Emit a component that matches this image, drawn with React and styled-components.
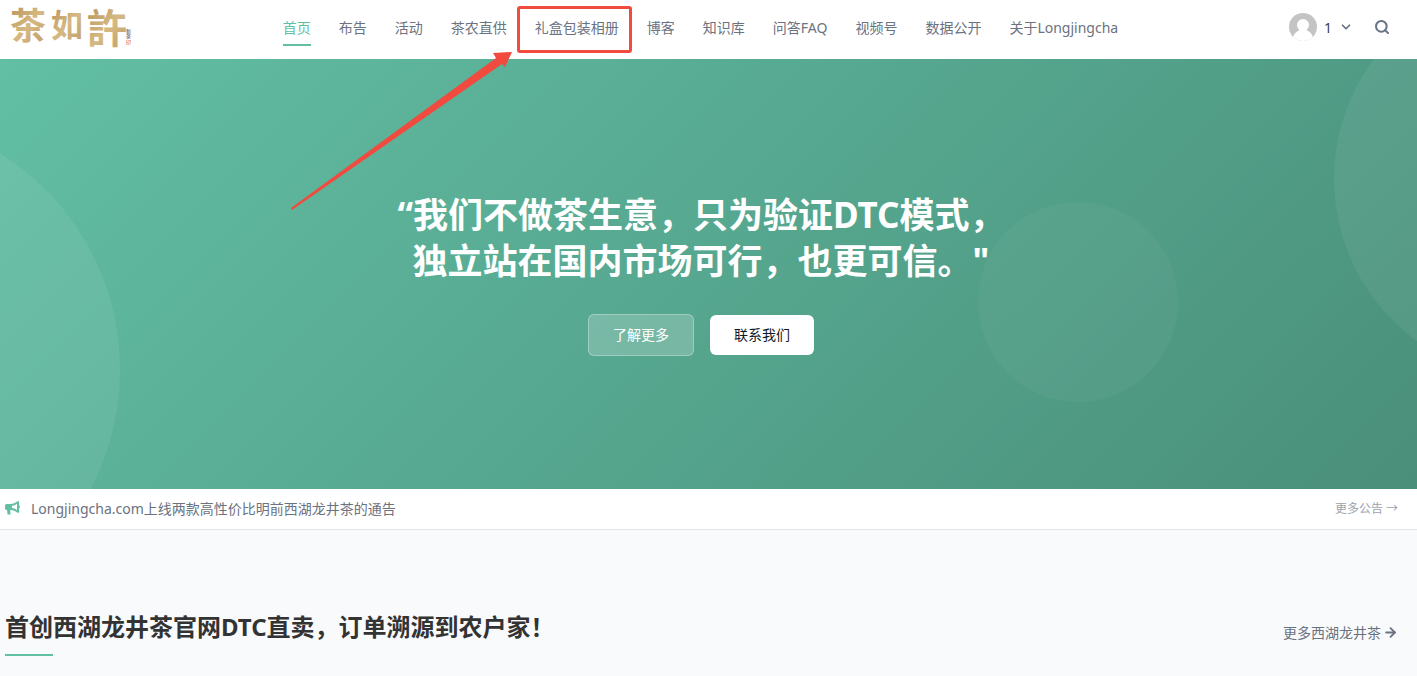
import React from 'react';
import styled, { createGlobalStyle } from 'styled-components';
import { FiArrowRight, FiChevronDown, FiSearch } from 'react-icons/fi';

const menus = [
  '首页',
  '布告',
  '活动',
  '茶农直供',
  '礼盒包装相册',
  '博客',
  '知识库',
  '问答FAQ',
  '视频号',
  '数据公开',
  '关于Longjingcha',
];

const Logo = () => (
  <LogoSvg viewBox="0 0 132 56" role="img" aria-label="茶如許">
    <defs>
      <linearGradient id="gold" x1="0" y1="0" x2="1" y2="1">
        <stop offset="0" stopColor="#b8935c" />
        <stop offset="0.5" stopColor="#d6b982" />
        <stop offset="1" stopColor="#bf9c66" />
      </linearGradient>
    </defs>
    <g fill="url(#gold)" fontWeight="700">
      <text x="10" y="39" fontSize="36">茶</text>
      <text x="51" y="37" fontSize="32">如</text>
      <text x="87" y="43" fontSize="40">許</text>
    </g>
    <g fontSize="5">
      <text x="126" y="33" fill="#333">新</text>
      <text x="126" y="38" fill="#333">茶</text>
      <text x="126" y="44" fill="#d9534f">印</text>
    </g>
  </LogoSvg>
);

const Megaphone = () => (
  <MegaphoneSvg viewBox="0 0 16 16" aria-hidden="true">
    <path
      fill="currentColor"
      fillRule="evenodd"
      d="M14 1c-.6 0-3.400 3-7 3H2.500A1.500 1.500 0 0 0 1 5.500v3A1.500 1.500 0 0 0 2.500 10H3l.6 4.500h3L6.200 10H7c3.600 0 6.400 3 7 3 .5 0 1-.5 1-1V8.400a1.500 1.500 0 0 0 0-2.800V2c0-.5-.5-1-1-1zm-1 2.800v6.400C11.400 9 10 8.300 8 8.100V5.900c2-.2 3.400-.9 5-2.100z"
    />
  </MegaphoneSvg>
);

const App = () => {
  return (
    <>
      <GlobalStyle />
      <Header>
        <LogoLink href="#"><Logo /></LogoLink>
        <Nav>
          {menus.map((menu, index) => (
            <NavLink href="#" key={menu} $active={index === 0}>
              {menu}
              {menu === '礼盒包装相册' && (
                <>
                  <MarkBox />
                  <MarkArrow viewBox="0 0 222 160" aria-hidden="true">
                    <path fill="#f04b3e" d="M0 157 L205 7 L202 2 L221 1 L214 16 L211 13 L1 159 Z" />
                  </MarkArrow>
                </>
              )}
            </NavLink>
          ))}
        </Nav>
        <UserArea>
          <UserButton>
            <Avatar viewBox="0 0 28 28" aria-hidden="true">
              <clipPath id="round"><circle cx="14" cy="14" r="14" /></clipPath>
              <g clipPath="url(#round)">
                <rect width="28" height="28" fill="#c4c4c4" />
                <circle cx="14" cy="12" r="6" fill="#fff" />
                <path d="M3 28 C4 22 6 19 11 17 H17 C22 19 24 22 25 28 Z" fill="#fff" />
              </g>
            </Avatar>
            1
            <FiChevronDown size={14} strokeWidth={3} color="#687385" />
          </UserButton>
          <SearchButton aria-label="搜索"><FiSearch size={16} strokeWidth={3} /></SearchButton>
        </UserArea>
      </Header>

      <Hero>
        <Circle $size={512} $left="-392px" $top="55px" $alpha={0.07} />
        <Circle $size={200} $right="239px" $top="143px" $alpha={0.04} />
        <Circle $size={400} $right="-317px" $top="-80px" $alpha={0.06} />
        <HeroTitle>
          “我们不做茶生意，只为验证DTC模式，<br />独立站在国内市场可行，也更可信。"
        </HeroTitle>
        <ButtonRow>
          <GhostButton>了解更多</GhostButton>
          <HeroButton>联系我们</HeroButton>
        </ButtonRow>
      </Hero>

      <Notice>
        <NoticeLink href="#"><Megaphone />Longjingcha.com上线两款高性价比明前西湖龙井茶的通告</NoticeLink>
        <NoticeMore href="#">更多公告 →</NoticeMore>
      </Notice>

      <Section>
        <SectionTitle>首创西湖龙井茶官网DTC直卖，订单溯源到农户家！</SectionTitle>
        <SectionMore href="#">更多西湖龙井茶<FiArrowRight size={15} strokeWidth={3} /></SectionMore>
      </Section>
    </>
  );
};

export default App;

const GlobalStyle = createGlobalStyle`
  * {
    box-sizing: border-box;
  }
  body {
    margin: 0;
    background: #f8fafc;
    color: #6b7280;
    font-family: "Noto Sans", "Noto Sans CJK SC", sans-serif;
    font-size: 14px;
    overflow-x: hidden;
  }
  a {
    color: inherit;
    text-decoration: none;
  }
  button {
    font: inherit;
    border: none;
    cursor: pointer;
  }
`;

const Header = styled.header`
  display: grid;
  grid-template-columns: 1fr auto 1fr;
  align-items: center;
  height: 59px;
  padding: 0 16px 4px 0;
  background: #fff;
`;

const LogoLink = styled.a`
  display: flex;
  align-self: start;
`;

const LogoSvg = styled.svg`
  width: 132px;
  height: 56px;
  overflow: visible;
  font-family: "Liberation Sans", "Noto Sans CJK SC", sans-serif;
`;

const Nav = styled.nav`
  display: flex;
  gap: 28px;
`;

const NavLink = styled.a`
  position: relative;
  padding: 8px 0 6px;
  line-height: 20px;
  white-space: nowrap;
  border-bottom: 2px solid ${({ $active }) => ($active ? '#62bfa4' : 'transparent')};
  color: ${({ $active }) => ($active ? '#62bfa4' : '#6b7280')};
`;

const MarkBox = styled.span`
  position: absolute;
  top: -4px;
  left: -18px;
  z-index: 1;
  width: 115px;
  height: 47px;
  border: 3px solid #f04b3e;
  border-radius: 3px;
`;

const MarkArrow = styled.svg`
  position: absolute;
  top: 41px;
  left: -244px;
  z-index: 1;
  width: 222px;
  height: 160px;
`;

const UserArea = styled.div`
  display: flex;
  justify-content: flex-end;
  align-items: center;
  gap: 13px;
  padding: 0 3px 2px 0;
`;

const UserButton = styled.button`
  display: flex;
  align-items: center;
  gap: 7px;
  padding: 0;
  background: none;
  color: #374151;
`;

const Avatar = styled.svg`
  width: 28px;
  height: 28px;
`;

const SearchButton = styled.button`
  display: flex;
  padding: 8px;
  background: none;
  color: #687385;
`;

const Hero = styled.section`
  position: relative;
  display: flex;
  flex-direction: column;
  align-items: center;
  justify-content: center;
  gap: 30px;
  min-height: 430px;
  padding-right: 15px;
  overflow: hidden;
  background: linear-gradient(135deg, #62bfa4 0%, #4a8f7a 100%);
`;

const Circle = styled.span`
  position: absolute;
  top: ${({ $top }) => $top};
  left: ${({ $left }) => $left || 'auto'};
  right: ${({ $right }) => $right || 'auto'};
  width: ${({ $size }) => $size}px;
  height: ${({ $size }) => $size}px;
  border-radius: 50%;
  background: rgba(255, 255, 255, ${({ $alpha }) => $alpha});
`;

const HeroTitle = styled.h1`
  position: relative;
  margin: 0;
  color: #fff;
  font-size: 35px;
  line-height: 46px;
  font-weight: 700;
  text-align: center;
`;

const ButtonRow = styled.div`
  position: relative;
  display: flex;
  align-items: center;
  gap: 16px;
`;

const HeroButton = styled.button`
  padding: 10px 24px;
  border-radius: 6px;
  line-height: 20px;
  background: #fff;
  color: #111827;
`;

const GhostButton = styled(HeroButton)`
  border: 1px solid rgba(255, 255, 255, 0.3);
  background: rgba(255, 255, 255, 0.2);
  color: #fff;
`;

const Notice = styled.div`
  display: flex;
  justify-content: space-between;
  align-items: center;
  height: 41px;
  padding: 0 19px 2px 4px;
  border-bottom: 1px solid #e5e7eb;
  background: #fff;
`;

const NoticeLink = styled.a`
  display: flex;
  align-items: center;
  gap: 11px;
`;

const MegaphoneSvg = styled.svg`
  width: 16px;
  height: 16px;
  color: #62bfa4;
`;

const NoticeMore = styled.a`
  color: #9ca3af;
  font-size: 12px;
`;

const Section = styled.section`
  display: flex;
  justify-content: space-between;
  align-items: center;
  padding: 80px 19px 20px 5px;
`;

const SectionTitle = styled.h2`
  margin: 0;
  color: #333;
  font-size: 24px;
  line-height: 34px;
  font-weight: 700;

  &::after {
    content: '';
    display: block;
    width: 48px;
    height: 2px;
    margin-top: 10px;
    background: #62bfa4;
  }
`;

const SectionMore = styled.a`
  display: flex;
  align-items: center;
  gap: 2px;
  padding-bottom: 2px;
`;
